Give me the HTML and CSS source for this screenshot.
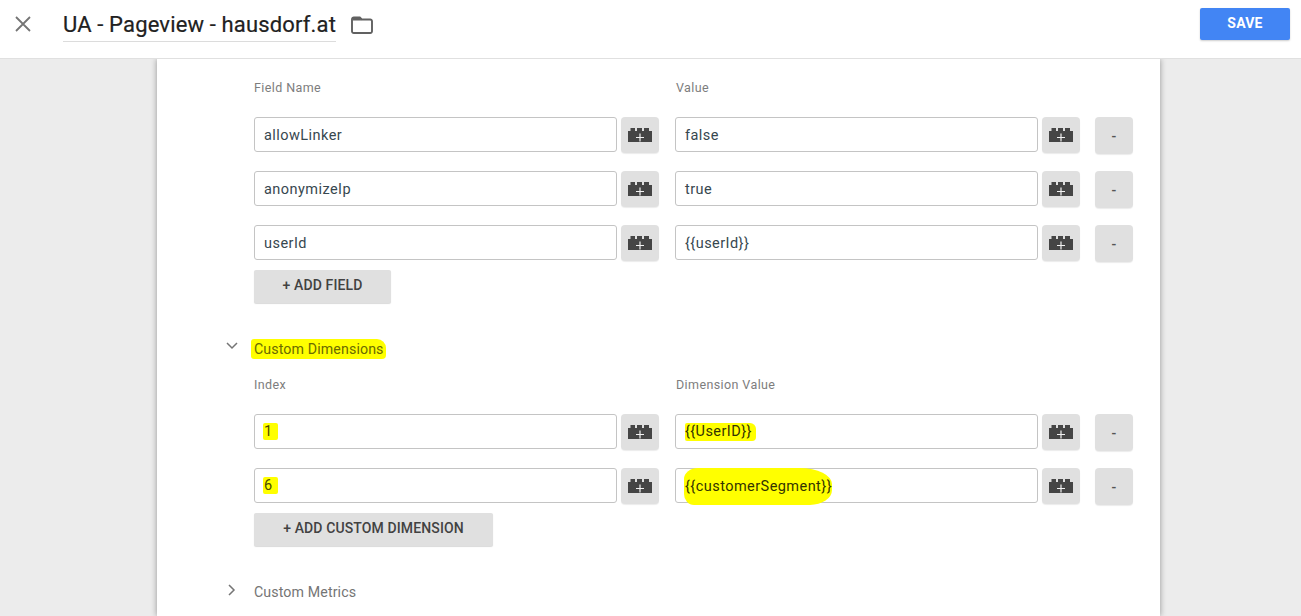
FILE: index.html
```html
<!DOCTYPE html>
<html lang="en">
<head>
<meta charset="utf-8">
<title>UA - Pageview - hausdorf.at</title>
<link rel="stylesheet" href="styles.css">
</head>
<body>
<svg class="defs" width="0" height="0" aria-hidden="true">
  <symbol id="brick" viewBox="0 0 24 14">
    <path fill="#454545" d="M2.500 0h4.500v3h2V0h5v3h2V0h5v3H24v11H0V3h2.500z"/>
    <path fill="none" stroke="#f2f2f2" stroke-width="1.200" d="M12 5.500v8M8 9.500h8"/>
  </symbol>
</svg>
<header class="topbar">
  <svg class="close" width="18" height="18" viewBox="0 0 18 18"><path d="M2 2l14 14M16 2L2 16" stroke="#757575" stroke-width="1.800" fill="none"/></svg>
  <h1 class="title">UA - Pageview - hausdorf.at</h1>
  <svg class="folder" width="22" height="18" viewBox="0 0 22 18"><path d="M2.800 1.500h6l2 2h8.400a1.800 1.800 0 0 1 1.800 1.800v9.900a1.800 1.800 0 0 1-1.800 1.800H2.800A1.800 1.800 0 0 1 1 15.200V3.300a1.800 1.800 0 0 1 1.800-1.800z" fill="none" stroke="#616161" stroke-width="1.900"/><path d="M2 2h7l1.500 2.500H2z" fill="#616161"/></svg>
  <button class="save">SAVE</button>
</header>
<main class="canvas">
  <section class="card">
    <div class="labels"><span>Field Name</span><span>Value</span></div>
    <div class="row">
      <div class="input">allowLinker</div><button class="var"><svg class="brick"><use href="#brick"/></svg></button>
      <div class="input">false</div><button class="var"><svg class="brick"><use href="#brick"/></svg></button>
      <button class="minus">-</button>
    </div>
    <div class="row">
      <div class="input">anonymizeIp</div><button class="var"><svg class="brick"><use href="#brick"/></svg></button>
      <div class="input">true</div><button class="var"><svg class="brick"><use href="#brick"/></svg></button>
      <button class="minus">-</button>
    </div>
    <div class="row">
      <div class="input">userId</div><button class="var"><svg class="brick"><use href="#brick"/></svg></button>
      <div class="input">{{userId}}</div><button class="var"><svg class="brick"><use href="#brick"/></svg></button>
      <button class="minus">-</button>
    </div>
    <button class="add add-field">+ ADD FIELD</button>

    <div class="section-head">
      <svg class="chev" width="12" height="8" viewBox="0 0 12 8"><path d="M1 1l5 5 5-5" fill="none" stroke="#757575" stroke-width="1.500"/></svg>
      <span class="mark mark-title">Custom Dimensions</span>
    </div>
    <div class="labels labels-dim"><span>Index</span><span>Dimension Value</span></div>
    <div class="row">
      <div class="input"><span class="mark mark-num">1</span></div><button class="var"><svg class="brick"><use href="#brick"/></svg></button>
      <div class="input"><span class="mark mark-val">{{UserID}}</span></div><button class="var"><svg class="brick"><use href="#brick"/></svg></button>
      <button class="minus">-</button>
    </div>
    <div class="row">
      <div class="input"><span class="mark mark-num">6</span></div><button class="var"><svg class="brick"><use href="#brick"/></svg></button>
      <div class="input"><span class="mark mark-seg">{{customerSegment}}</span></div><button class="var"><svg class="brick"><use href="#brick"/></svg></button>
      <button class="minus">-</button>
    </div>
    <button class="add add-dim">+ ADD CUSTOM DIMENSION</button>

    <div class="section-head metrics">
      <svg class="chev" width="8" height="12" viewBox="0 0 8 12"><path d="M1 1l5 5-5 5" fill="none" stroke="#757575" stroke-width="1.500"/></svg>
      <span>Custom Metrics</span>
    </div>
  </section>
</main>
</body>
</html>
```

FILE: styles.css
```css
* { box-sizing: border-box; }
html, body { margin: 0; height: 616px; overflow: hidden; }
body { font-family: Roboto, "Liberation Sans", sans-serif; background: #ececec; color: #333; display: flex; flex-direction: column; }
.defs { position: absolute; }
button { font-family: inherit; border: 0; cursor: pointer; }

.topbar { position: relative; z-index: 1; flex: none; height: 59px; background: #fff; border-bottom: 1px solid #e0e0e0; display: flex; align-items: flex-start; padding: 0 11px 0 14px; }
.close { flex: none; margin-top: 15px; }
.title { margin: 9px 0 0 31px; padding: 0 0 1px; font-size: 22px; font-weight: 400; line-height: 31px; letter-spacing: .15px; color: #212121; border-bottom: 1px solid #dcdcdc; white-space: nowrap; -webkit-text-stroke: 0.2px #212121; }
.folder { flex: none; margin: 16px 0 0 15px; }
.save { margin: 8px 0 0 auto; width: 90px; height: 32px; background: #4285f4; color: #fff; font-size: 14px; font-weight: 700; border-radius: 2px; box-shadow: 0 1px 2px rgba(0,0,0,.2); letter-spacing: .2px; padding: 0 0 2px; }

.canvas { flex: 1; min-height: 0; padding-left: 157px; }
.card { width: 1003px; height: 100%; background: #fff; box-shadow: 0 0 6px rgba(0,0,0,.38); padding: 21px 0 0 97px; }

.labels { display: flex; height: 15px; align-items: center; font-size: 12.500px; letter-spacing: .4px; color: #7d7d7d; margin-bottom: 22px; }
.labels span:first-child { width: 421px; }
.labels span:last-child { padding-left: 1px; }

.row { display: flex; align-items: flex-start; height: 36px; margin-bottom: 18px; }
.input { width: 363px; height: 35px; border: 1px solid #c4c4c4; border-radius: 3px; padding: 0 9px; font-size: 14.500px; letter-spacing: .45px; line-height: 35px; color: #37474f; white-space: nowrap; background: #fff; }
.var { width: 38px; height: 36px; margin: 0 16px 0 4px; padding: 0; background: #e0e0e0; border-radius: 4px; box-shadow: 0 1px 1px rgba(0,0,0,.08); display: flex; align-items: center; justify-content: center; }
.brick { width: 24px; height: 14px; display: block; }
.minus { width: 38px; height: 37px; margin-left: -1px; background: #e0e0e0; border-radius: 4px; box-shadow: 0 1px 1px rgba(0,0,0,.08); font-size: 14px; font-weight: 500; color: #555; padding: 0; }

.add { display: block; height: 33px; background: #e0e0e0; border-radius: 2px; box-shadow: 0 1px 1px rgba(0,0,0,.15); font-size: 14px; font-weight: 500; color: #424242; padding: 0 0 3px; letter-spacing: .12px; }
.add-field { width: 137px; margin-top: -9px; }
.add-dim { width: 239px; margin-top: -9px; }

.section-head { position: relative; margin-top: 37px; height: 18px; display: flex; align-items: center; font-size: 14.200px; letter-spacing: .12px; color: #757575; }
.section-head .chev { position: absolute; left: -28px; top: 2px; }
.section-head + .labels { margin-top: 19px; }
.metrics { margin-top: 37px; }
.metrics .chev { left: -26px; top: 1px; }

.mark { background: #ffff00; }
.mark-title { color: #6b6b00; padding: 2px 2px 2px 3px; margin-left: -3px; border-radius: 3px 9px 4px 3px; }
.mark-num { display: inline-block; width: 15px; line-height: 17px; padding-left: 1px; margin-left: -1px; border-radius: 2px; color: #4a4a00; vertical-align: 1px; }
.mark-val { display: inline-block; line-height: 18px; padding: 0 4px 0 0; border-radius: 2px 6px 4px 2px; color: #333300; vertical-align: 1px; }
.mark-seg { display: inline-block; line-height: 36px; padding: 1px 0 0 1px; margin: -1px 0 0 -1px; border-radius: 14px 32px 22px 10px / 11px 16px 15px 11px; color: #333300; vertical-align: top; }
```
